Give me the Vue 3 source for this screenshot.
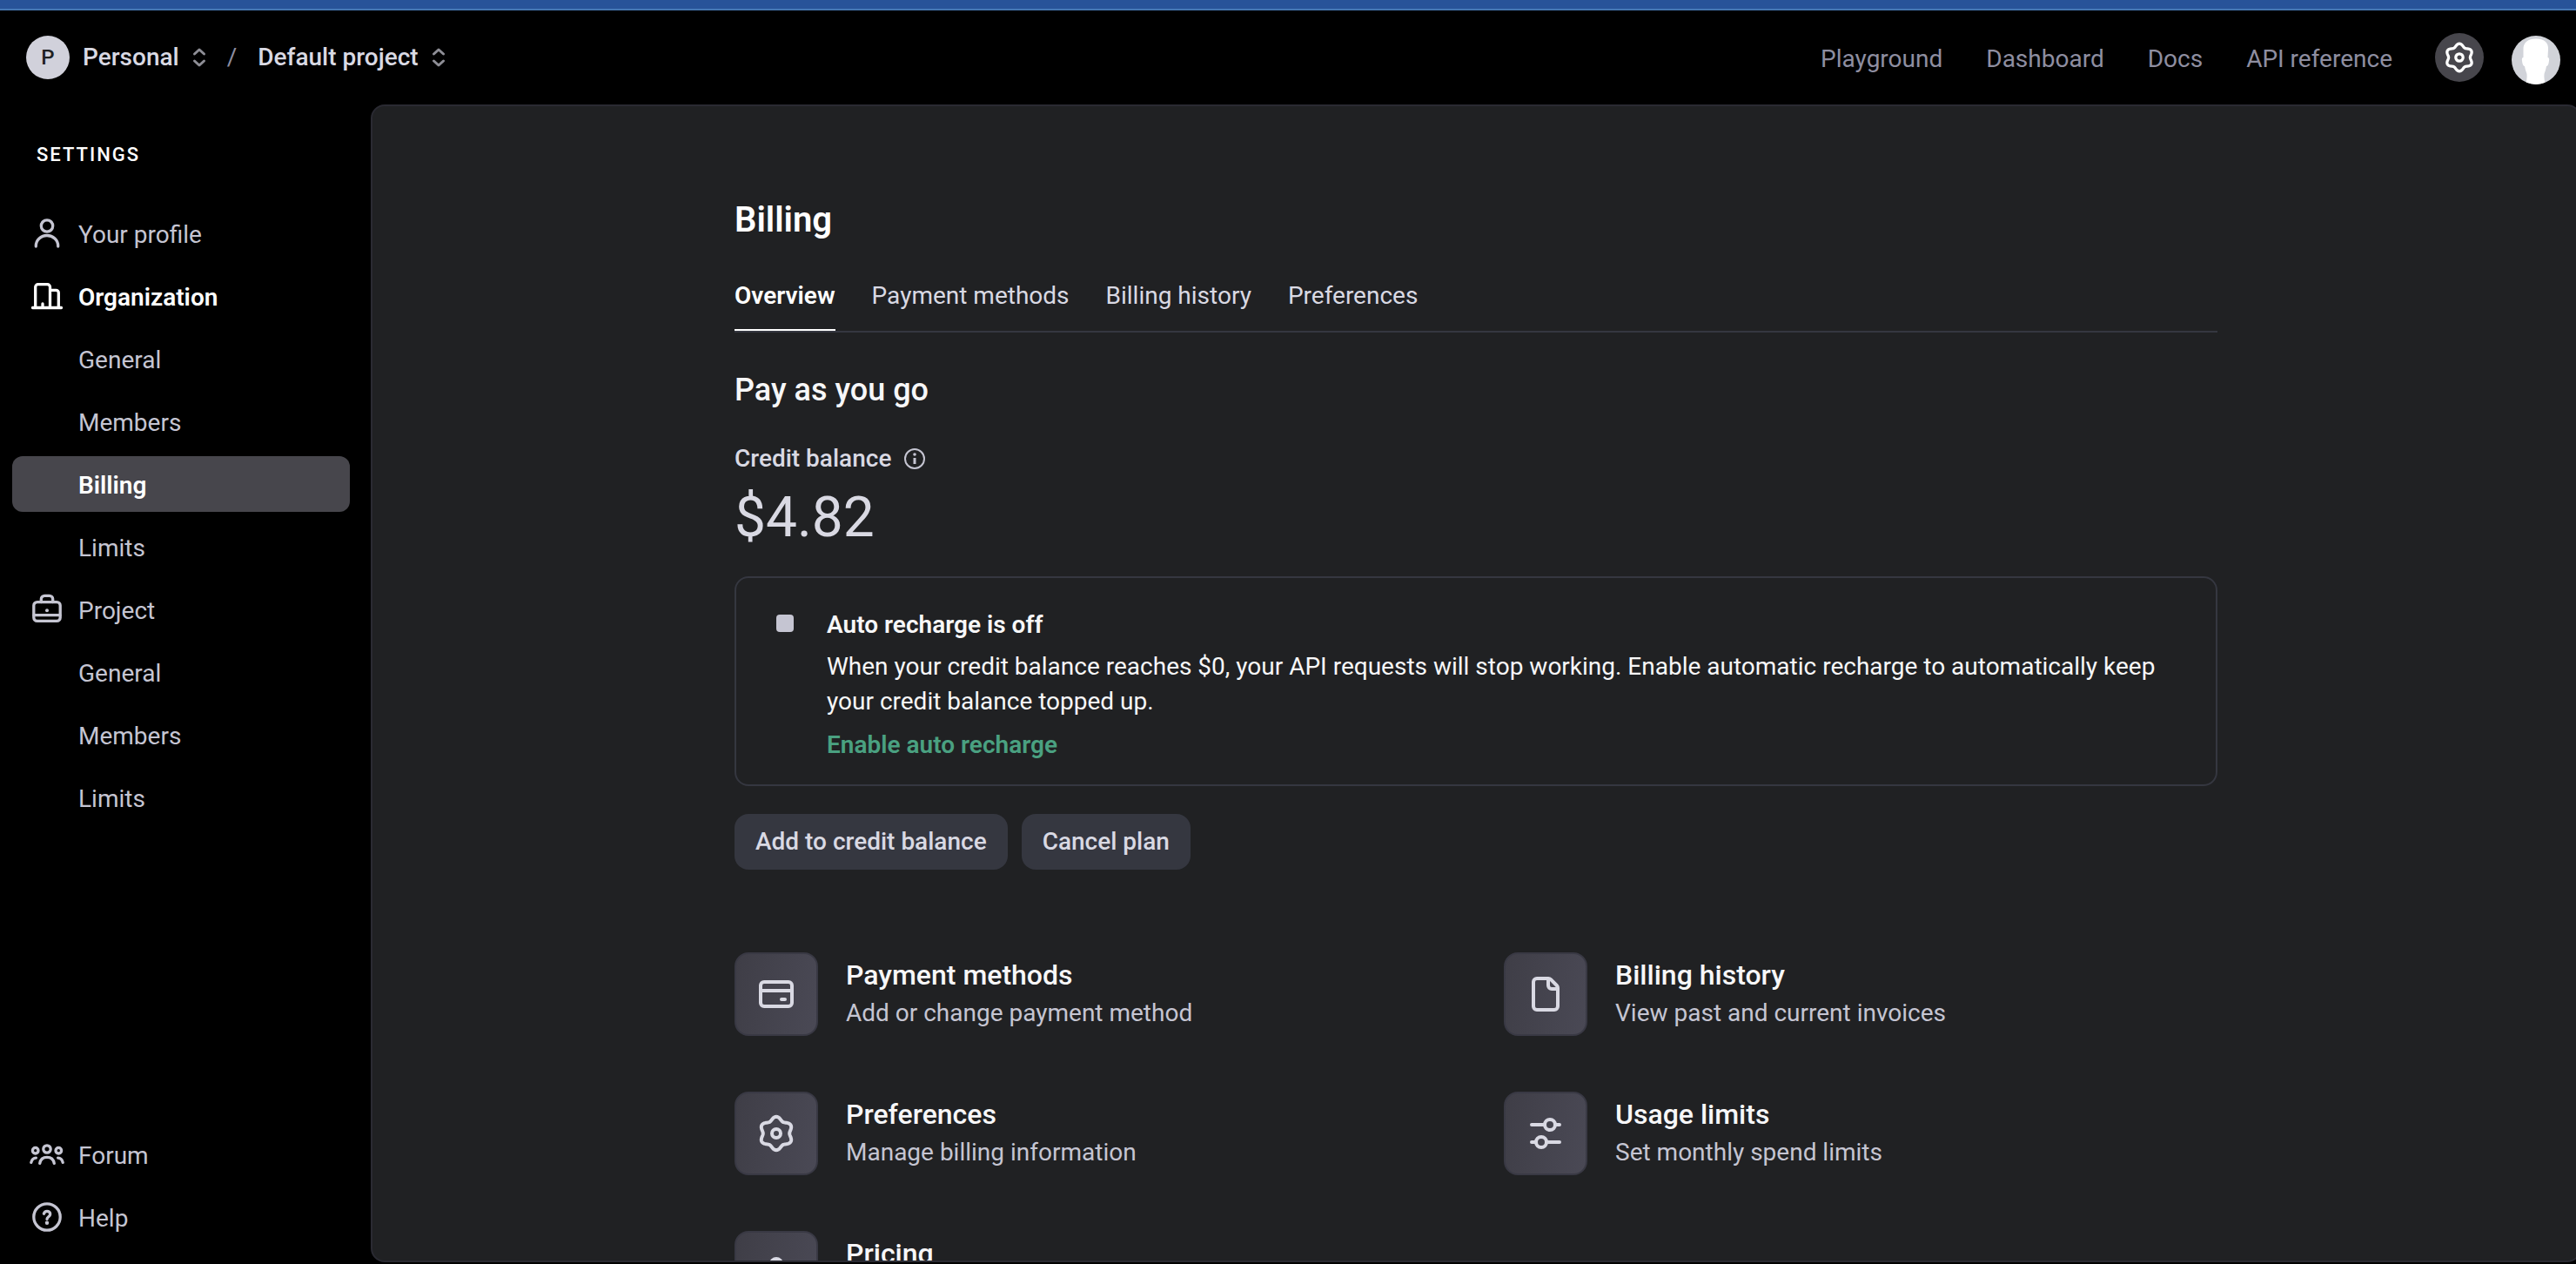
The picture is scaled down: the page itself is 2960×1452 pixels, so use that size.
<script setup>
import { h } from 'vue'

// Six-lobed gear outline, sampled around the circle.
function gearPath(radius, depth) {
  const points = []
  for (let i = 0; i < 120; i++) {
    const a = (i / 120) * Math.PI * 2
    const r = radius + depth * Math.cos(6 * a)
    points.push(`${(r * Math.sin(a)).toFixed(2)} ${(-r * Math.cos(a)).toFixed(2)}`)
  }
  return `M${points.join('L')}Z`
}

const shapes = {
  profile: [
    ['circle', { cx: 0, cy: -8.5, r: 6.7 }],
    ['path', { d: 'M-12.7 15V14.5A12.7 12 0 0 1 12.7 14.5V15' }],
  ],
  organization: [
    ['path', { d: 'M-16.5 13.5H16.5M-13.3 13.5V-10.3a3 3 0 0 1 3-3H.5a3 3 0 0 1 3 3V13.5M3.5-6.7H10.3a3 3 0 0 1 3 3V13.5M-5 9V13.5' }],
  ],
  project: [
    ['rect', { x: -15.2, y: -8.4, width: 30.4, height: 21.8, rx: 4 }],
    ['path', { d: 'M-6.7-8.4V-11.7a4 4 0 0 1 4-4H2.7a4 4 0 0 1 4 4V-8.4M-15 6.7H15' }],
    ['circle', { cx: 0, cy: 1.3, r: 2, fill: 'currentColor', stroke: 'none' }],
  ],
  forum: [
    ['circle', { cx: 0, cy: -6, r: 4.2 }],
    ['circle', { cx: -13.3, cy: -4.3, r: 3.3 }],
    ['circle', { cx: 13.3, cy: -4.3, r: 3.3 }],
    ['path', { d: 'M-8.3 10.4C-7.6 6-4.4 3.3 0 3.3S7.6 6 8.3 10.4M-18.2 9.4C-17.4 6-15.4 4.1-12.6 4.1M18.2 9.4C17.4 6 15.4 4.1 12.6 4.1' }],
  ],
  help: [
    ['circle', { cx: 0, cy: 0, r: 15.2 }],
    ['path', { d: 'M-3.6-3.7C-3-5.6-1.7-6.6 0-6.6 2.1-6.6 3.7-5.2 3.7-3.3 3.7-.4 0-.2 0 2.4' }],
    ['circle', { cx: 0, cy: 6.8, r: 2.2, fill: 'currentColor', stroke: 'none' }],
  ],
  gear: [
    ['path', { d: gearPath(14.1, 1.7) }],
    ['circle', { cx: 0, cy: 0, r: 4.2 }],
  ],
  card: [
    ['rect', { x: -18, y: -14, width: 36, height: 28, rx: 4 }],
    ['path', { d: 'M-18-4H18M6 6H10' }],
  ],
  file: [
    ['path', { d: 'M-10-18H3.2a4 4 0 0 1 2.8 1.2L12.8-10a4 4 0 0 1 1.2 2.8V14a4 4 0 0 1-4 4H-10a4 4 0 0 1-4-4V-14a4 4 0 0 1 4-4ZM3-18V-10a4 4 0 0 0 4 4H14' }],
  ],
  preferences: [
    ['path', { d: gearPath(17.2, 2) }],
    ['circle', { cx: 0, cy: 0, r: 5 }],
  ],
  sliders: [
    ['path', { d: 'M-16-10H-1M11-10H16M-16 10H-11M1 10H16' }],
    ['circle', { cx: 5, cy: -10, r: 6 }],
    ['circle', { cx: -5, cy: 10, r: 6 }],
  ],
  pricing: [
    ['circle', { cx: 0, cy: -10, r: 6 }],
    ['path', { d: 'M-12 16V10A12 8 0 0 1 12 10V16' }],
  ],
}

const Icon = (props) =>
  h(
    'svg',
    {
      class: 'icon',
      width: props.size,
      height: props.size,
      viewBox: [-props.size / 2, -props.size / 2, props.size, props.size].join(' '),
      fill: 'none',
      stroke: 'currentColor',
      'stroke-width': props.size > 40 ? 4 : 3.3,
      'stroke-linecap': 'round',
      'stroke-linejoin': 'round',
      'aria-hidden': 'true',
    },
    shapes[props.name].map(([tag, attrs]) => h(tag, attrs)),
  )
Icon.props = ['name', 'size']

const selectors = ['Personal', 'Default project']
const topLinks = ['Playground', 'Dashboard', 'Docs', 'API reference']

const menu = [
  { label: 'Your profile', icon: 'profile' },
  { label: 'Organization', icon: 'organization', strong: true },
  { label: 'General' },
  { label: 'Members' },
  { label: 'Billing', active: true, strong: true },
  { label: 'Limits' },
  { label: 'Project', icon: 'project' },
  { label: 'General' },
  { label: 'Members' },
  { label: 'Limits' },
]
const support = [
  { label: 'Forum', icon: 'forum' },
  { label: 'Help', icon: 'help' },
]

const tabs = ['Overview', 'Payment methods', 'Billing history', 'Preferences']

const cards = [
  { title: 'Payment methods', text: 'Add or change payment method', icon: 'card' },
  { title: 'Billing history', text: 'View past and current invoices', icon: 'file' },
  { title: 'Preferences', text: 'Manage billing information', icon: 'preferences' },
  { title: 'Usage limits', text: 'Set monthly spend limits', icon: 'sliders' },
  { title: 'Pricing', icon: 'pricing' },
]
</script>

<template>
  <div class="app">
    <div class="banner"></div>

    <header class="header">
      <div class="crumbs">
        <template v-for="(name, i) in selectors" :key="name">
          <span v-if="i" class="slash">/</span>
          <button type="button" class="selector">
            <span v-if="!i" class="initial">P</span>
            <span>{{ name }}</span>
            <svg width="16" height="24" viewBox="-8 -12 16 24" fill="none" stroke="currentColor" stroke-width="3" stroke-linecap="round" stroke-linejoin="round" aria-hidden="true">
              <path d="M-5.5-4 0-9 5.5-4M-5.5 4 0 9 5.5 4" />
            </svg>
          </button>
        </template>
      </div>
      <nav class="top-nav">
        <a v-for="link in topLinks" :key="link" href="#">{{ link }}</a>
      </nav>
      <div class="actions">
        <button type="button" class="round settings" aria-label="Settings">
          <Icon name="gear" :size="40" />
        </button>
        <button type="button" class="round account" aria-label="Account">
          <svg width="56" height="56" viewBox="-28 -28 56 56" aria-hidden="true">
            <path fill="#fff" d="M-14.5-12C-15-20-9-24.500 0-24.500S15-20 14-12L13.500-3C15-3 15.500-1 15 1 14.500 5 13.500 7 12 7 11.500 11 10 14 9.500 16 9 20 10 24 10.500 28H-11.500C-11 24-10 20-10.500 16-11 14-12.500 11-13 7-14.500 7-15.500 5-16 1-16.500-1-16-3-14.500-3Z" />
          </svg>
        </button>
      </div>
    </header>

    <div class="body">
      <aside class="sidebar">
        <h2 class="side-title">SETTINGS</h2>
        <nav class="side-nav">
          <a v-for="(item, i) in menu" :key="i" href="#" :class="{ strong: item.strong, active: item.active }">
            <span class="slot"><Icon v-if="item.icon" :name="item.icon" :size="40" /></span>
            <span class="side-label">{{ item.label }}</span>
          </a>
        </nav>
        <nav class="side-nav support">
          <a v-for="item in support" :key="item.label" href="#">
            <span class="slot"><Icon :name="item.icon" :size="40" /></span>
            <span class="side-label">{{ item.label }}</span>
          </a>
        </nav>
      </aside>

      <main class="panel">
        <div class="content">
          <h1>Billing</h1>
          <nav class="tabs">
            <a v-for="(tab, i) in tabs" :key="tab" href="#" :class="{ current: i === 0 }">{{ tab }}</a>
          </nav>

          <h2 class="plan">Pay as you go</h2>
          <div class="label">
            <span>Credit balance</span>
            <svg width="26" height="26" viewBox="-13 -13 26 26" fill="none" stroke="currentColor" stroke-width="2" aria-hidden="true">
              <circle r="11" />
              <path d="M0-1V6" stroke-width="3" />
              <circle cy="-5" r="1.800" fill="currentColor" stroke="none" />
            </svg>
          </div>
          <div class="amount">$4.82</div>

          <section class="notice">
            <span class="stop"></span>
            <div>
              <h3>Auto recharge is off</h3>
              <p>When your credit balance reaches $0, your API requests will stop working. Enable automatic recharge to automatically keep your credit balance topped up.</p>
              <a href="#">Enable auto recharge</a>
            </div>
          </section>

          <div class="buttons">
            <button type="button">Add to credit balance</button>
            <button type="button">Cancel plan</button>
          </div>

          <div class="cards">
            <a v-for="card in cards" :key="card.title" href="#" class="card">
              <span class="tile"><Icon :name="card.icon" :size="48" /></span>
              <span class="card-text">
                <span class="card-title">{{ card.title }}</span>
                <span class="card-desc">{{ card.text }}</span>
              </span>
            </a>
          </div>
        </div>
      </main>
    </div>
  </div>
</template>

<style>
body {
  background: #000;
}
</style>

<style scoped>
* {
  box-sizing: border-box;
}

.app {
  display: flex;
  flex-direction: column;
  height: 100vh;
  overflow: hidden;
  background: #000;
  color: #d9d9e3;
  font-family: Roboto, "Liberation Sans", sans-serif;
  font-size: 28px;
  line-height: 40px;
}

h1,
h2,
h3,
p {
  margin: 0;
}

a {
  color: inherit;
  text-decoration: none;
}

button {
  border: 0;
  padding: 0;
  background: none;
  color: inherit;
  font: inherit;
  cursor: pointer;
}

svg {
  display: block;
  flex: none;
}

.banner {
  flex: none;
  height: 12px;
  background: #285399;
  border-bottom: 2px solid #4677b3;
}

.header {
  display: flex;
  align-items: center;
  flex: none;
  height: 108px;
  padding: 0 18px 0 30px;
}

.crumbs {
  display: flex;
  align-items: center;
  gap: 24px;
  font-weight: 500;
}

.selector {
  display: flex;
  align-items: center;
  gap: 15px;
}

.selector svg {
  color: #8e8e96;
}

.initial {
  width: 50px;
  border-radius: 50%;
  background: #d1d1db;
  color: #202123;
  font-size: 24px;
  line-height: 50px;
}

.slash {
  color: #8e8ea0;
  font-weight: 400;
}

.top-nav {
  display: flex;
  gap: 50px;
  margin-left: auto;
  padding-top: 4px;
  color: #8e8ea0;
}

.actions {
  display: flex;
  align-items: center;
  gap: 32px;
  margin-left: 49px;
}

.round {
  display: flex;
  align-items: center;
  justify-content: center;
  width: 56px;
  height: 56px;
  border-radius: 50%;
  overflow: hidden;
}

.settings {
  background: #47464c;
  color: #fff;
}

.account {
  margin-top: 6px;
  background: #d1d3d9;
}

.body {
  display: flex;
  flex: 1;
  min-height: 0;
  padding-bottom: 2px;
}

.sidebar {
  display: flex;
  flex-direction: column;
  flex: none;
  width: 426px;
  padding: 42px 24px 20px 14px;
}

.side-title {
  padding-left: 28px;
  color: #fff;
  font-size: 22px;
  font-weight: 500;
  line-height: 32px;
  letter-spacing: 2px;
}

.side-nav {
  display: flex;
  flex-direction: column;
  gap: 8px;
  margin-top: 42px;
  color: #c5c5d2;
}

.side-nav a {
  display: flex;
  align-items: center;
  gap: 16px;
  height: 64px;
  padding-left: 20px;
  border-radius: 12px;
}

.side-nav .strong {
  color: #fff;
  font-weight: 600;
}

.side-nav .active {
  background: #47464c;
}

.slot {
  width: 40px;
}

.side-label {
  padding-top: 3px;
}

.side-nav.support {
  margin-top: auto;
}

.panel {
  flex: 1;
  min-width: 0;
  margin-right: -6px;
  padding: 107px 64px 0;
  border: 2px solid #2a2a32;
  border-radius: 16px;
  background: #202123;
  overflow: hidden;
}

.content {
  max-width: 1704px;
  margin: 0 auto;
}

h1 {
  color: #fff;
  font-size: 40px;
  font-weight: 600;
  line-height: 48px;
}

.tabs {
  display: flex;
  gap: 42px;
  margin-top: 43px;
  border-bottom: 2px solid #353740;
}

.tabs a {
  padding-bottom: 18px;
  border-bottom: 2px solid transparent;
}

.tabs .current {
  border-color: #fff;
  color: #fff;
  font-weight: 600;
}

.plan {
  margin-top: 44px;
  color: #f7f7f8;
  font-size: 36px;
  font-weight: 500;
  line-height: 44px;
}

.label {
  display: flex;
  align-items: center;
  gap: 14px;
  margin-top: 37px;
  font-weight: 500;
}

.label svg {
  color: #c5c5d2;
}

.amount {
  margin-top: 8px;
  font-size: 64px;
  line-height: 80px;
}

.notice {
  display: flex;
  gap: 38px;
  margin-top: 27px;
  padding: 34px 46px 25px;
  border: 2px solid #353740;
  border-radius: 16px;
  color: #f7f7f8;
}

.stop {
  flex: none;
  width: 20px;
  height: 20px;
  margin-top: 8px;
  border-radius: 4px;
  background: #c5c5d2;
}

.notice h3 {
  font-size: 28px;
  font-weight: 600;
}

.notice p {
  margin: 8px 0 10px;
}

.notice a {
  display: inline-block;
  color: #4aa181;
  font-weight: 600;
}

.buttons {
  display: flex;
  gap: 16px;
  margin-top: 32px;
}

.buttons button {
  height: 64px;
  padding: 0 24px;
  border-radius: 16px;
  background: #353740;
  font-weight: 500;
}

.cards {
  display: grid;
  grid-template-columns: 1fr 1fr;
  gap: 64px;
  margin-top: 95px;
}

.card {
  display: flex;
  gap: 32px;
}

.tile {
  display: flex;
  align-items: center;
  justify-content: center;
  flex: none;
  width: 96px;
  height: 96px;
  border: 2px solid #393944;
  border-radius: 16px;
  background: linear-gradient(100deg, #3f3e47, #4a4955);
}

.card-text {
  display: flex;
  flex-direction: column;
  gap: 4px;
  padding-top: 6px;
}

.card-title {
  color: #f7f7f8;
  font-size: 32px;
  font-weight: 500;
}

.card-desc {
  color: #c5c5d2;
}
</style>
